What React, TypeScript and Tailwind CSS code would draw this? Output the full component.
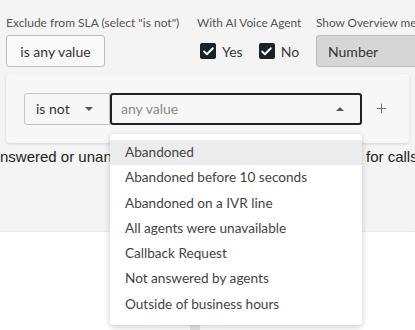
import { Check, Plus } from 'lucide-react'

const options = [
  'Abandoned',
  'Abandoned before 10 seconds',
  'Abandoned on a IVR line',
  'All agents were unavailable',
  'Callback Request',
  'Not answered by agents',
  'Outside of business hours',
]

const ui = { fontFamily: 'Lato, "Noto Sans", sans-serif' }

function Box({ label }: { label: string }) {
  return (
    <label className="flex items-center gap-[6px] text-[14px] text-[#3a3a3a]">
      <span className="w-[16px] h-[16px] rounded-[2px] bg-[#1b2227] flex items-center justify-center">
        <Check size={13} strokeWidth={3.5} className="text-white" />
      </span>
      {label}
    </label>
  )
}

export default function App() {
  return (
    <div className="w-[415px] h-[330px] overflow-hidden bg-white relative" style={ui}>
      <div className="bg-[#f4f4f4] h-[232px] border-b border-dotted border-[#e2e2e2]">
        {/* filter row */}
        <div className="flex pl-[6px] pt-[16px] whitespace-nowrap">
          <div className="w-[191px] shrink-0">
            <p className="text-[12px] text-[#555] leading-[14px]">Exclude from SLA (select "is not")</p>
            <button className="mt-[5px] h-[32px] w-[99px] rounded-[3px] border border-[#bdbdbd] bg-[#f9f9f9] text-[14px] text-[#333]">is any value</button>
          </div>
          <div className="w-[119px] shrink-0">
            <p className="text-[11.8px] text-[#555] leading-[14px]">With AI Voice Agent</p>
            <div className="mt-[5px] h-[32px] flex items-center gap-[16px] pl-[3px]">
              <Box label="Yes" />
              <Box label="No" />
            </div>
          </div>
          <div className="shrink-0">
            <p className="text-[11.8px] text-[#555] leading-[14px]">Show Overview metric</p>
            <div className="mt-[5px] h-[32px] w-[120px] rounded-[3px] border border-[#bdbdbd] bg-[#d6d6d6] flex items-center pl-[11px] text-[14px] text-[#333]">Number</div>
          </div>
        </div>

        {/* condition card */}
        <div className="mx-[6px] mt-[7px] h-[69px] rounded-[4px] bg-[#f7f7f7] shadow-[0_1px_3px_rgba(0,0,0,0.14)] flex items-center pl-[18px] relative z-10">
          <div className="h-[32px] w-[86px] border border-[#c4c4c4] rounded-l-[3px] flex items-center pl-[11px] text-[14px] text-[#333]">
            is not
            <span className="ml-[15px] w-0 h-0 border-l-[4px] border-r-[4px] border-t-[4px] border-l-transparent border-r-transparent border-t-[#555]" />
          </div>
          <div className="relative">
            <div className="h-[32px] w-[252px] border-2 border-[#1e2327] rounded-[3px] flex items-center pl-[9px] text-[14px] text-[#8a8a8a]">
              any value
              <span className="ml-auto mr-[16px] w-0 h-0 border-l-[4px] border-r-[4px] border-b-[4px] border-l-transparent border-r-transparent border-b-[#555]" />
            </div>
            <ul className="absolute left-0 top-[41px] w-[252px] bg-white rounded-[4px] shadow-[0_2px_6px_rgba(0,0,0,0.2)] pt-[6px] pb-[8px] z-20">
              {options.map((o, i) => (
                <li key={o} className={`h-[25.3px] flex items-center pl-[15px] text-[13.6px] text-[#444] ${i === 0 ? 'bg-[#ececec]' : ''}`}>{o}</li>
              ))}
            </ul>
          </div>
          <Plus size={15} strokeWidth={1.5} className="ml-[12px] text-[#666]" />
        </div>

        {/* sentence behind the menu */}
        <div className="flex mt-[5px] whitespace-nowrap text-[15px] text-[#222] leading-[18px]" style={{ fontFamily: '"Liberation Sans", Arial, sans-serif' }}>
          <div className="w-[362px] shrink-0 overflow-hidden">nswered or unanswered calls that are not handled</div>
          <div className="pl-[4px]">for calls</div>
        </div>
      </div>

      {/* chart stub below */}
      <div className="absolute left-[190px] top-[323px] w-[10px] h-[7px] bg-[#e6e6e6]" />
    </div>
  )
}
